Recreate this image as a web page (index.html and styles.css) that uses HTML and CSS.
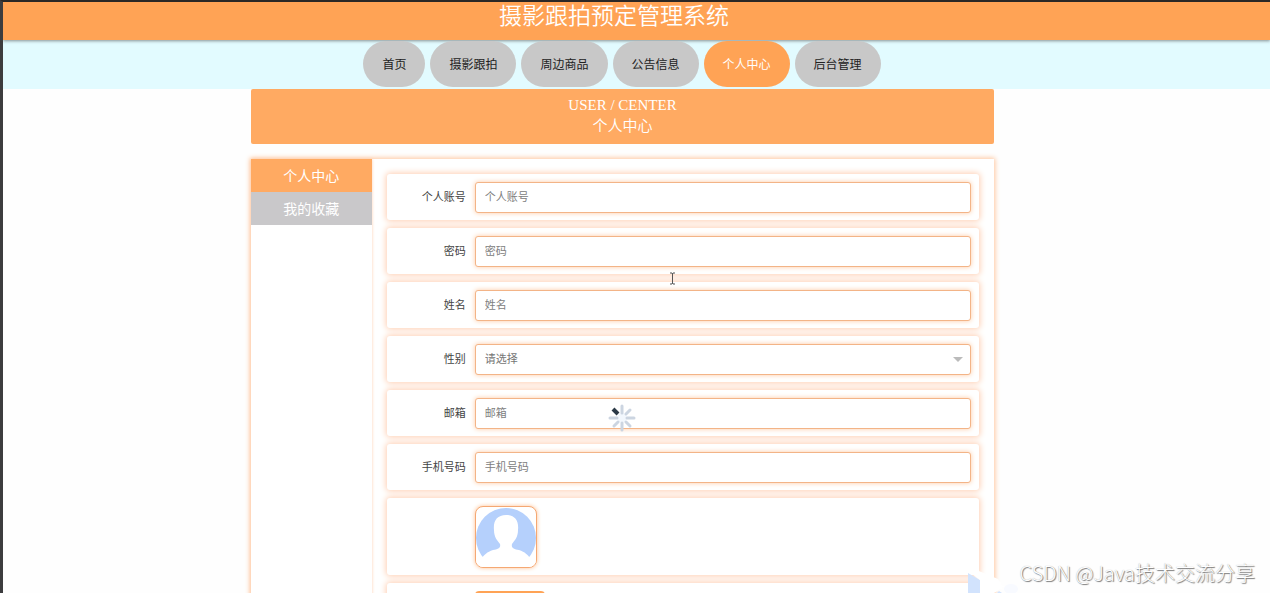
FILE: index.html
```html
<!DOCTYPE html>
<html lang="zh-CN">
<head>
<meta charset="utf-8">
<title>摄影跟拍预定管理系统</title>
<link rel="stylesheet" href="styles.css">
</head>
<body>
<div class="page">
  <header class="header"><h1 class="title">摄影跟拍预定管理系统</h1></header>
  <nav class="nav">
    <a class="pill" href="#">首页</a>
    <a class="pill" href="#">摄影跟拍</a>
    <a class="pill" href="#">周边商品</a>
    <a class="pill" href="#">公告信息</a>
    <a class="pill active" href="#">个人中心</a>
    <a class="pill" href="#">后台管理</a>
  </nav>
  <div class="content">
    <section class="banner">
      <p class="banner-en">USER / CENTER</p>
      <h2 class="banner-cn">个人中心</h2>
    </section>
    <main class="panel">
      <aside class="side">
        <a class="side-link current" href="#">个人中心</a>
        <a class="side-link" href="#">我的收藏</a>
      </aside>
      <form class="form">
        <div class="row"><label class="label" for="account">个人账号</label><input class="field" id="account" type="text" placeholder="个人账号"></div>
        <div class="row"><label class="label" for="password">密码</label><input class="field" id="password" type="password" placeholder="密码"></div>
        <div class="row"><label class="label" for="name">姓名</label><input class="field" id="name" type="text" placeholder="姓名"></div>
        <div class="row"><label class="label" for="gender">性别</label>
          <div class="select-wrap">
            <select class="field" id="gender"><option>请选择</option><option>男</option><option>女</option></select>
            <span class="caret"></span>
          </div>
        </div>
        <div class="row"><label class="label" for="email">邮箱</label><input class="field" id="email" type="text" placeholder="邮箱"></div>
        <div class="row"><label class="label" for="phone">手机号码</label><input class="field" id="phone" type="text" placeholder="手机号码"></div>
        <div class="row">
          <span class="label"></span>
          <svg class="avatar" viewBox="0 0 60 60" role="img" aria-label="头像">
            <circle cx="30" cy="31" r="30" fill="#b5d0fc"/>
            <path d="M30 8C21 8 17 14 18 23C18 30 21 33 24 37C25 41 22 42 17 43C11 45 8 48 6 51L8 60H52L54 51C52 48 49 45 43 43C38 42 35 41 36 37C39 33 42 30 42 23C43 14 39 8 30 8Z" fill="#fff"/>
            <path d="M0 50H7L12 60H0ZM60 50H53L48 60H60Z" fill="#fff"/>
            <path d="M6 51H54V62H6Z" fill="#fff"/>
          </svg>
        </div>
        <div class="row"><span class="label"></span><button class="submit" type="button" aria-label="提交"></button></div>
      </form>
    </main>
  </div>
</div>
<svg class="spinner" viewBox="0 0 28 28" aria-hidden="true">
  <circle cx="14" cy="14" r="5" fill="#f2f7fd"/>
  <g stroke="#ccd5e1" stroke-width="3" stroke-linecap="round">
    <path d="M14 2V9M14 19V26M2 14H9M19 14H26M22 6L18 10M22 22L18 18M6 22L10 18"/>
    <path d="M5 5L10 10" stroke="#2c3a47" stroke-width="4" stroke-linecap="butt"/>
  </g>
</svg>
<svg class="cursor" viewBox="0 0 7 13" aria-hidden="true"><path d="M1 1H3L3.5 2L4 1H6M3.5 2V11M1 12H3L3.5 11L4 12H6" fill="none" stroke="#555"/></svg>
<svg class="float-logo" viewBox="0 0 50 24" aria-hidden="true">
  <path d="M0 4L12 11V24H0Z" fill="#d2e3fd"/>
  <path d="M0 2L6 0L30 10L36 18L26 24H12V11Z" fill="#fff"/>
  <ellipse cx="43" cy="20" rx="7" ry="5" fill="#f8faff"/>
  <path d="M29 24L31 22L34 24Z" fill="#d2e3fd"/>
</svg>
<div class="watermark">CSDN @Java技术交流分享</div>
</body>
</html>
```
FILE: styles.css
```css
* { box-sizing: border-box; }

body {
  margin: 0;
  background: #fefefe;
  font-family: "Noto Sans CJK SC", sans-serif;
  color: #333;
}

a { text-decoration: none; }

.page {
  height: 100vh;
  overflow: hidden;
  border-top: 2px solid #2b2826;
  border-left: 3px solid #3c3c3e;
}

.header {
  position: relative;
  height: 38px;
  padding-right: 45px;
  background: #ffa355;
  box-shadow: 0 1px 3px rgba(70, 70, 70, 0.6);
  text-align: center;
}

.title {
  margin: 0;
  font-size: 23px;
  line-height: 24px;
  font-weight: 350;
  color: #fff;
}

.nav {
  display: flex;
  justify-content: center;
  gap: 5px;
  height: 49px;
  padding: 1px 29px 0 0;
  background: #e2fbff;
}

.pill {
  position: relative;
  height: 46px;
  padding: 0 19px;
  border-radius: 23px;
  background: #c8c8c8;
  color: #222;
  font-size: 12px;
  line-height: 46px;
}

.pill.active { background: #ffa355; color: #fff; }

.content {
  display: flex;
  flex-direction: column;
  gap: 15px;
  padding-right: 28px;
}

.banner,
.panel { width: 60%; margin: 0 auto; }

.banner {
  padding: 6px 0 9px;
  border-radius: 2px;
  background: #ffaa62;
  color: #fff;
  text-align: center;
}

.banner-en,
.banner-cn {
  margin: 0;
  font-size: 15px;
  line-height: 20px;
  font-weight: 350;
}

.banner-en { font-family: "Liberation Serif", serif; }

.panel {
  display: flex;
  min-height: 600px;
  background: #fff;
  box-shadow: 0 0 5px 1px #ffc49a;
}

.side {
  flex: 0 0 121px;
  box-shadow: 0 0 3px #ffd0b0;
}

.side-link {
  display: block;
  background: #c9c8ca;
  color: #fff;
  font-size: 14px;
  line-height: 33px;
  text-align: center;
}

.side-link.current { background: #ffaa62; }

.form {
  flex: 1;
  display: flex;
  flex-direction: column;
  gap: 8px;
  padding: 15px;
}

.row {
  display: flex;
  align-items: center;
  padding: 8px 8px 7px 0;
  border-radius: 3px;
  background: #fff;
  box-shadow: 0 0 6px 1px #ffcdb0;
}

.label {
  flex: 0 0 88px;
  padding: 0 9px 3px 0;
  font-size: 11px;
  color: #444;
  text-align: right;
}

.field {
  flex: 1;
  width: 100%;
  height: 31px;
  padding: 0 9px 3px;
  border: 1px solid #f3b487;
  border-radius: 3px;
  background: #fff;
  box-shadow: 0 0 5px #ffc9a0;
  color: #757575;
  font-family: inherit;
  font-size: 11px;
  appearance: none;
}

.field::placeholder { color: #808080; }

.select-wrap { position: relative; flex: 1; display: flex; }

.caret {
  position: absolute;
  top: 13px;
  right: 8px;
  border: 5px solid transparent;
  border-top-color: #bbb;
  border-bottom: 0;
  pointer-events: none;
}

.avatar {
  width: 62px;
  height: 62px;
  border: 1px solid #f5a873;
  border-radius: 8px;
  background: #fff;
  box-shadow: 0 0 4px #ffc090;
}

.submit {
  width: 70px;
  height: 31px;
  border: 0;
  border-radius: 4px;
  background: #ffa355;
}

.spinner {
  position: absolute;
  top: 404px;
  left: 608px;
  width: 28px;
  height: 28px;
}

.cursor {
  position: absolute;
  top: 272px;
  left: 669px;
  width: 7px;
  height: 13px;
}

.float-logo {
  position: absolute;
  bottom: 0;
  left: 968px;
  width: 50px;
  height: 24px;
}

.watermark {
  position: absolute;
  right: 15px;
  bottom: 6px;
  color: #fff;
  font-family: "Noto Sans CJK SC", sans-serif;
  font-size: 20px;
  font-weight: 300;
  line-height: 28px;
  text-shadow: 1px 1px 1px #777, 0 0 1px #aaa;
}
```
